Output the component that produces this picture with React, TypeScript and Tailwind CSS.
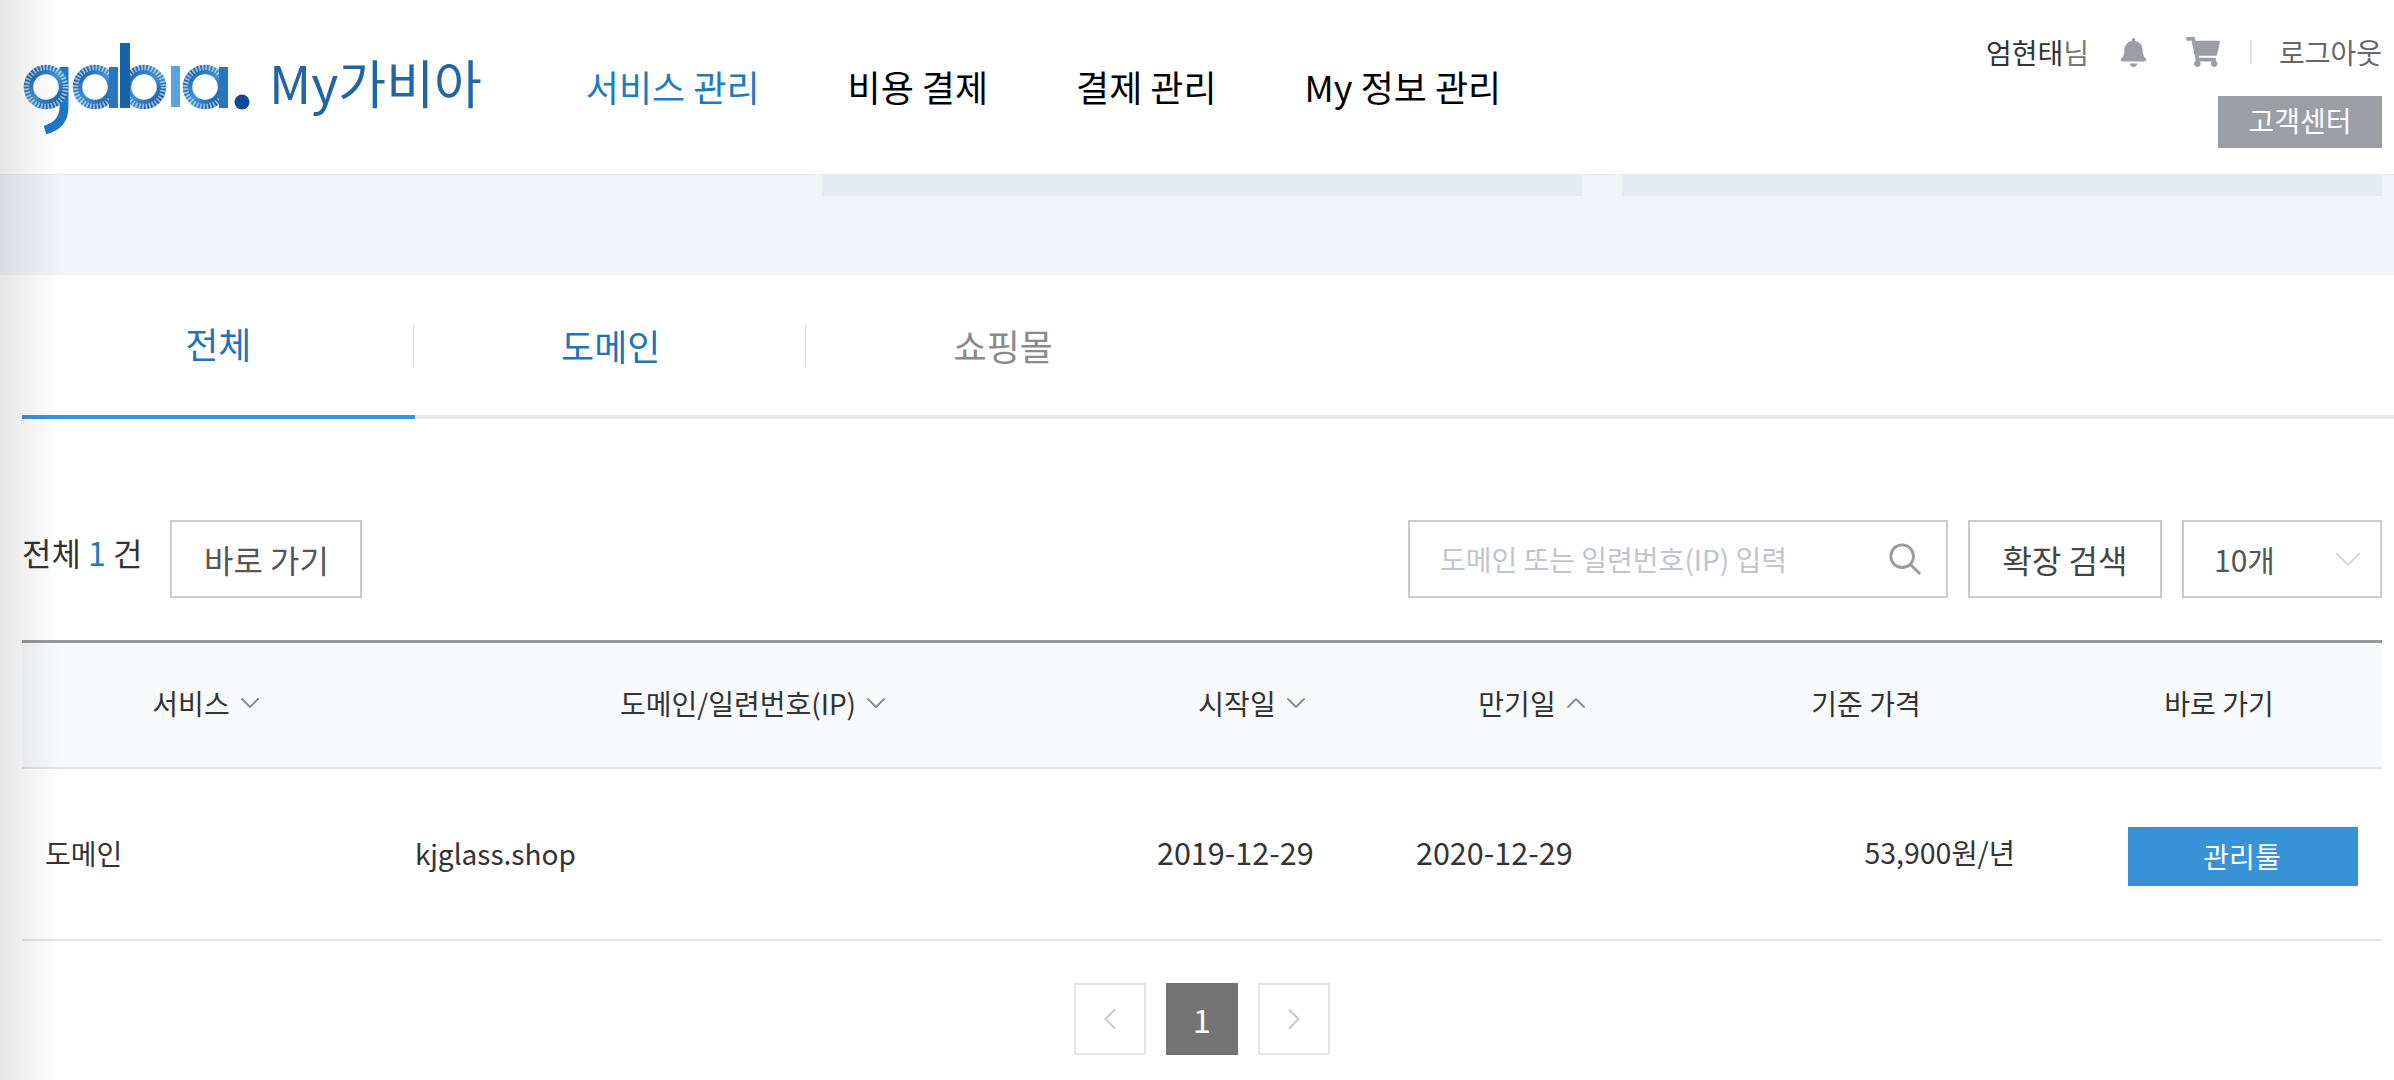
import { ChevronDown, ChevronLeft, ChevronRight, ChevronUp } from "lucide-react";
import { FaBell, FaShoppingCart } from "react-icons/fa";

const navItems = ["비용 결제", "결제 관리", "My 정보 관리"];

function GabiaLogo() {
  // rings: solid gradient stroke with dashed white strokes over it for the moire look
  const rings = [46, 95, 144, 205];
  return (
    <svg width="232" height="96" viewBox="20 40 232 96" className="shrink-0 blur-[0.5px]">
      <defs>
        <linearGradient id="logoBlue" x1="0" y1="0" x2="1" y2="1">
          <stop offset="0" stopColor="#1a5ca8" />
          <stop offset="0.5" stopColor="#3f93d6" />
          <stop offset="1" stopColor="#12539f" />
        </linearGradient>
      </defs>
      <path d="M64 68 V108 Q64 126 45 131" fill="none" stroke="#1c78c4" strokeWidth={9} />
      {rings.map((cx) => (
        <g key={cx}>
          <circle cx={cx} cy={88} r={17.5} fill="none" stroke="url(#logoBlue)" strokeWidth={9.5} />
          <circle cx={cx} cy={88} r={19.5} fill="none" stroke="#ffffff" strokeOpacity={0.6} strokeWidth={5.5} strokeDasharray="1.6 1.8" />
        </g>
      ))}
      <rect x="109" y="68" width="9" height="41" fill="#2a76bd" />
      <rect x="120" y="44" width="10" height="65" fill="#1a62aa" />
      <rect x="171" y="67" width="9" height="41" fill="#5aa5de" />
      <rect x="219" y="68" width="9" height="41" fill="#2a76bd" />
      <circle cx="242" cy="103" r="7.5" fill="#0d4a96" />
    </svg>
  );
}

function Header() {
  return (
    <header className="flex h-[174px] items-start bg-white pr-[12px] pl-[20px]">
      <div className="flex h-[174px] items-center">
        <GabiaLogo />
        <span className="mt-[-10px] ml-[17px] text-[52px] leading-none text-[#2265a6]">My가비아</span>
        <nav className="mt-[-3px] ml-[104px] flex items-center gap-[88px] text-[36px] text-black">
          <a className="text-[#1f7bc0]">서비스 관리</a>
          {navItems.map((item) => (
            <a key={item}>{item}</a>
          ))}
        </nav>
      </div>
      <div className="ml-auto flex flex-col items-end">
        <div className="mt-[36px] flex h-[32px] items-center text-[28px] text-[#333333]">
          <span>
            엄현태<span className="text-[#777777]">님</span>
          </span>
          <FaBell className="ml-[31px] h-[29px] w-[27px] text-[#9b9ea5]" />
          <FaShoppingCart className="ml-[39px] h-[30px] w-[34px] text-[#9b9ea5]" />
          <span className="mr-[27px] ml-[30px] h-[24px] w-[2px] bg-[#e3e3e3]" />
          <a className="text-[#666666]">로그아웃</a>
        </div>
        <a className="mt-[28px] flex h-[52px] w-[164px] items-center justify-center bg-[#9b9ea5] pb-[4px] text-[28px] text-white">
          고객센터
        </a>
      </div>
    </header>
  );
}

function Band() {
  return (
    <section className="h-[101px] border-t border-[#e9eaec] bg-[#f0f3f8] pr-[12px]">
      <div className="flex justify-end gap-[40px]">
        <div className="h-[21px] w-[760px] bg-[#e5e9f2]" />
        <div className="h-[21px] w-[760px] bg-[#e5e9f2]" />
      </div>
    </section>
  );
}

function Tabs() {
  const tabs = [
    { label: "전체", color: "text-[#1f73b7]", active: true },
    { label: "도메인", color: "text-[#1f73b7]", active: false },
    { label: "쇼핑몰", color: "text-[#8a8a8a]", active: false },
  ];
  return (
    <div className="ml-[22px] flex h-[144px] border-b-[4px] border-[#e9e9e9]">
      {tabs.map((tab, i) => (
        <div
          key={tab.label}
          className={`relative mb-[-4px] flex w-[392.5px] items-center justify-center pb-[5px] text-[36px] ${tab.color} ${
            tab.active ? "border-b-[4px] border-[#3792d8]" : ""
          }`}
        >
          {tab.label}
          {i < 2 && <span className="absolute top-[50px] right-[1px] h-[42px] w-[1px] bg-[#d9d9d9]" />}
        </div>
      ))}
    </div>
  );
}

function Toolbar() {
  return (
    <div className="mt-[101px] mr-[12px] ml-[22px] flex h-[78px] items-center text-[32px] text-[#555555]">
      <span className="mt-[-14px] text-[32px] text-[#333333]">
        전체 <span className="text-[#1f7bc0]">1</span> 건
      </span>
      <button className="ml-[28px] h-[78px] w-[192px] border-2 border-[#c8cccc]">바로 가기</button>
      <div className="ml-auto flex h-[78px] w-[540px] items-center border-2 border-[#c8cccc] pr-[23px] pl-[30px] text-[28px] text-[#c0c4cc]">
        <span className="whitespace-nowrap">도메인 또는 일련번호(IP) 입력</span>
        <svg width="36" height="34" viewBox="0 0 36 36" className="ml-auto" fill="none" stroke="#9a9a9a" strokeWidth="3">
          <circle cx="15" cy="15" r="12" />
          <path d="M23.5 23.5 L34 34" />
        </svg>
      </div>
      <button className="ml-[20px] h-[78px] w-[194px] border-2 border-[#c8cccc] text-[#444444]">확장 검색</button>
      <div className="ml-[20px] flex h-[78px] w-[200px] items-center justify-between border-2 border-[#c8cccc] pr-[20px] pl-[30px] text-[30px]">
        <span>10개</span>
        <ChevronDown className="-mr-[11px] h-[46px] w-[46px] text-[#c5c8d2]" strokeWidth={0.7} />
      </div>
    </div>
  );
}

const columns = "grid grid-cols-[366px_728px_270px_290px_380px_326px]";

function HeaderCell({ label, sort }: { label: string; sort?: "up" | "down" }) {
  return (
    <div className="flex items-center justify-center gap-[12px] pb-[4px]">
      <span>{label}</span>
      {sort === "down" && <ChevronDown className="-mx-[8px] h-[32px] w-[32px] text-[#8f8f8f]" strokeWidth={1.5} />}
      {sort === "up" && <ChevronUp className="-mx-[8px] h-[32px] w-[32px] text-[#8f8f8f]" strokeWidth={1.5} />}
    </div>
  );
}

function DomainTable() {
  return (
    <div className="mt-[42px] mr-[12px] ml-[22px] text-[28px] text-[#333333]">
      <div className={`${columns} h-[129px] border-t-[3px] border-b-[2px] border-t-[#999999] border-b-[#e4e4e4] bg-[#f8f9fb]`}>
        <HeaderCell label="서비스" sort="down" />
        <HeaderCell label="도메인/일련번호(IP)" sort="down" />
        <HeaderCell label="시작일" sort="down" />
        <HeaderCell label="만기일" sort="up" />
        <HeaderCell label="기준 가격" />
        <HeaderCell label="바로 가기" />
      </div>
      <div className={`${columns} h-[172px] items-center border-b-[2px] border-[#e4e4e4]`}>
        <div className="pb-[3px] pl-[23px]">도메인</div>
        <div className="pb-[3px] pl-[27px]">kjglass.shop</div>
        <div className="pb-[3px] pl-[41px] text-[30.5px]">2019-12-29</div>
        <div className="pb-[3px] pl-[30px] text-[30.5px]">2020-12-29</div>
        <div className="pr-[41px] pb-[3px] text-right text-[28.5px]">53,900원/년</div>
        <div className="pt-[5px] pl-[72px]">
          <button className="h-[59px] w-[230px] bg-[#3792d8] pr-[2px] pb-[2px] text-white">관리툴</button>
        </div>
      </div>
    </div>
  );
}

function Pagination() {
  return (
    <div className="mt-[42px] flex justify-center gap-[20px] pl-[10px]">
      <button className="flex h-[72px] w-[72px] items-center justify-center border-2 border-[#e4e4e6]">
        <ChevronLeft className="h-[36px] w-[36px] text-[#c5c8d2]" strokeWidth={1.4} />
      </button>
      <button className="flex h-[72px] w-[72px] items-center justify-center bg-[#737373] text-[32px] text-white">1</button>
      <button className="flex h-[72px] w-[72px] items-center justify-center border-2 border-[#e4e4e6]">
        <ChevronRight className="h-[36px] w-[36px] text-[#c5c8d2]" strokeWidth={1.4} />
      </button>
    </div>
  );
}

export default function App() {
  return (
    <main className="relative h-[1080px] w-full overflow-hidden bg-white font-['Noto_Sans_CJK_KR',sans-serif]">
      <Header />
      <Band />
      <Tabs />
      <Toolbar />
      <DomainTable />
      <Pagination />
      <div className="pointer-events-none absolute inset-y-0 left-0 w-[60px] bg-gradient-to-r from-black/10 to-transparent" />
    </main>
  );
}
